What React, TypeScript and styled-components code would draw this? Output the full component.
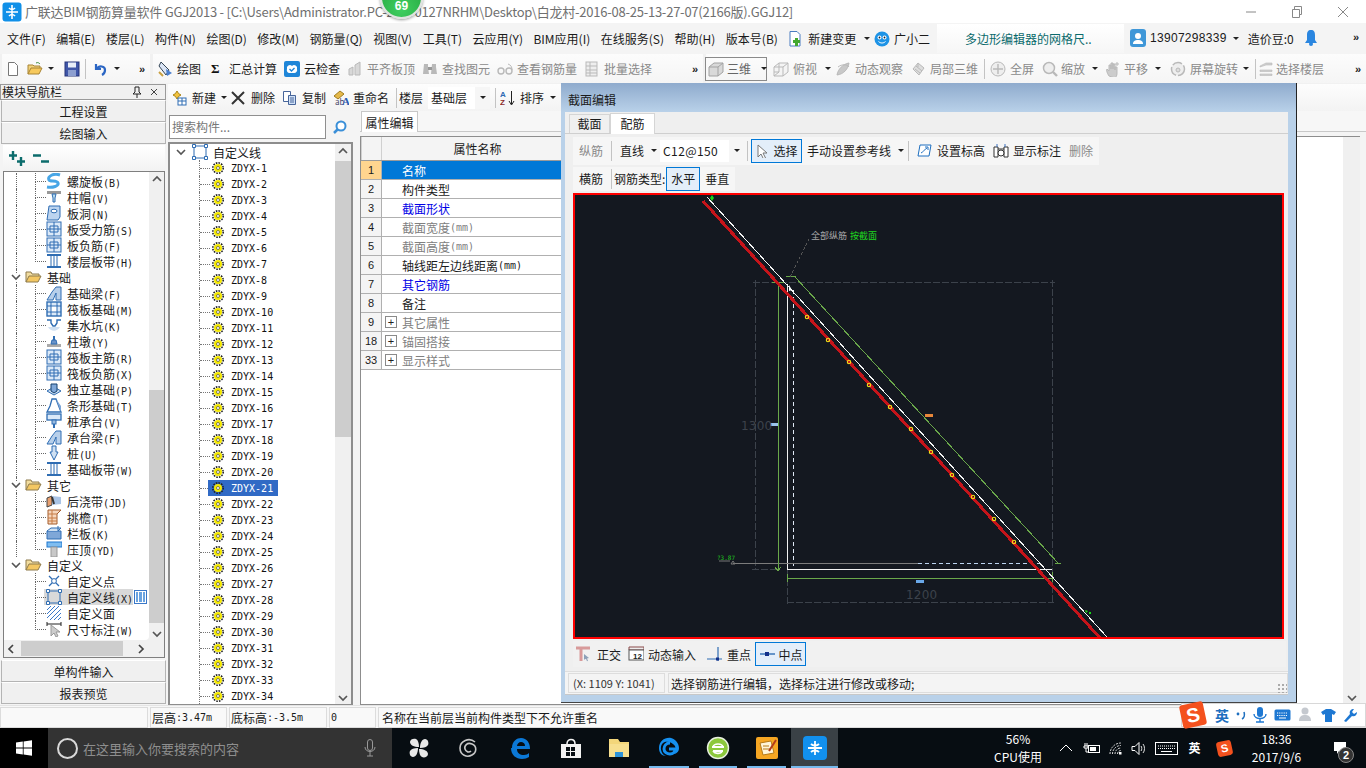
import React from 'react';
import styled, { createGlobalStyle } from 'styled-components';

const Global = createGlobalStyle`
  html, body { margin: 0; padding: 0; background: #fff; overflow: hidden; }
  * { box-sizing: border-box; }
  body { font-family: "Noto Sans CJK SC", "Liberation Sans", sans-serif; font-size: 12px; color: #1a1a1a; }
`;

const Lat = styled.span`font-family: "DejaVu Sans Mono", "Liberation Mono", monospace; font-size: 10px;`;
const Mix = ({ t }: { t: string }) => (
  <>{t.split(/([\x00-\x7f]+)/).map((p, i) => (/^[\x00-\x7f]+$/.test(p) ? <Lat key={i}>{p}</Lat> : p))}</>
);

const Svg = styled.svg`flex: none; display: block;`;
const Ic = ({ s = 16, w, h, children }: { s?: number; w?: number; h?: number; children: React.ReactNode }) => (
  <Svg width={w ?? s} height={h ?? s} viewBox={`0 0 ${w ?? s} ${h ?? s}`}>{children}</Svg>
);

/* ---------- toolbar and tree icons ---------- */
const G = '#b9b9b9';
const B = '#2f6db3';
const icons: Record<string, React.ReactNode> = {
  doc: <path d="M2.5 1.5h6l3 3v10h-9z" fill="#fff" stroke="#777" />,
  open: <><path d="M1 13V4h5l1 1h6v2" fill="#f1d27a" stroke="#a88434" /><path d="M1 13l3-6h11l-3 6z" fill="#f7c95c" stroke="#a88434" /><path d="M9 2c2-1 3 0 4 1" stroke="#3a8a3a" fill="none" /></>,
  save: <><rect x="1" y="1" width="14" height="14" fill="#3f56a8" stroke="#26357a" /><rect x="4" y="1.5" width="8" height="5" fill="#e8eef8" /><rect x="4" y="9" width="8" height="6" fill="#8d9fd0" /></>,
  undo: <path d="M3 3v5h5M4 8c2-4 8-3 8 1 0 2-1 4-3 5" fill="none" stroke="#2b66c4" strokeWidth="2.2" />,
  draw: <><path d="M4 1l8 8-3 5-7-9z" fill="#dbe5f5" stroke="#345" /><path d="M9 8l6 4-5 3z" fill="#4a7fd0" /><path d="M2 11l4 4" stroke="#c9a040" strokeWidth="2" /></>,
  cloud: <><rect x="0" y="0" width="16" height="16" rx="2" fill="#1f86d8" /><path d="M3 8a3 3 0 0 1 5-3 3 3 0 0 1 5 3 3 3 0 0 1-3 4H5a3 3 0 0 1-2-4z" fill="#fff" /><path d="M5.5 8l2 2 3-3" fill="none" stroke="#1f86d8" strokeWidth="1.4" /></>,
  align: <><path d="M2 14V8l4-2v8zM8 14V4l5-3v13z" fill="#d8d8d8" stroke={G} /></>,
  binoc: <><path d="M2 3h4v3l1 7H1zM10 3h4v3l1 7H9z" fill={G} /><rect x="6" y="6" width="4" height="3" fill="#999" /></>,
  glass: <><circle cx="4" cy="10" r="3" fill="none" stroke={G} strokeWidth="1.4" /><circle cx="12" cy="10" r="3" fill="none" stroke={G} strokeWidth="1.4" /><path d="M11 3c3 1 4 3 4 6" stroke={G} fill="none" /></>,
  batch: <><rect x="2" y="1" width="11" height="14" fill="#eee" stroke={G} /><path d="M2 5h11M2 9h11M2 12h11M6 1v14" stroke={G} /></>,
  cube: <><path d="M1 6l5-4h9v9l-5 4H1z" fill="#d9d9d9" stroke="#a3a3a3" /><path d="M1 6h9v9M10 6l5-4" fill="none" stroke="#a3a3a3" /></>,
  wire: <><path d="M1 6l5-4h9v9l-5 4H1z" fill="#f4f4f4" stroke={G} /><path d="M1 6h9v9M10 6l5-4M6 2v9H1M6 11l-5 4" fill="none" stroke={G} /></>,
  orbit: <><path d="M2 14c1-6 6-11 12-12-1 6-5 11-12 12z" fill="#c8c8c8" stroke={G} /><path d="M3 6c4-3 9-3 11 0" fill="none" stroke={G} /></>,
  part: <><path d="M3 8l5-6 6 5-5 7z" fill="#ddd" stroke={G} /><path d="M6 5l6 5M5 8l5 4M8 2v4" stroke={G} /></>,
  full: <><circle cx="8" cy="8" r="7" fill="#eee" stroke={G} /><path d="M8 3v10M3 8h10" stroke={G} strokeWidth="1.4" /></>,
  zoom: <><circle cx="7" cy="7" r="5.5" fill="#eee" stroke={G} strokeWidth="1.5" /><path d="M11 11l4 4" stroke={G} strokeWidth="2.4" /></>,
  hand: <><path d="M4 15c-2-3-3-6-2-7l2 2V4h2v4-6h2v6-5h2v6-3h2v6c0 3-1 4-2 5z" fill="#ccc" stroke={G} /><path d="M12 1v4M10 3h4" stroke={G} /></>,
  rot: <><circle cx="8" cy="8" r="6.5" fill="#eee" stroke={G} strokeWidth="1.5" strokeDasharray="10 2" /><circle cx="8" cy="9" r="2" fill="#ddd" stroke={G} /></>,
  floors: <><path d="M2 5l6-3h6v2H8L2 6zM2 9h12v1.5H2zM2 13h12v1.5H2z" fill="#cfcfcf" stroke={G} strokeWidth=".6" /></>,
  newc: <><path d="M6 1l1.6 2.6L10 5 7.6 6.4 6 9 4.4 6.4 2 5l2.4-1.4z" fill="#f2c23c" stroke="#a98418" /><rect x="7" y="8" width="8" height="7" fill="#fff" stroke="#2f6db3" /><path d="M7 11h8M11 8v7" stroke="#2f6db3" /></>,
  copy: <><path d="M1.5 1.5h7v10h-7z" fill="#fff" stroke="#47659a" /><path d="M6.5 5.5h7v9h-7z" fill="#cfe0f6" stroke="#47659a" /><path d="M8 8h4M8 10h4M8 12h4" stroke="#47659a" /></>,
  rename: <><path d="M1 6l6-5 4 3-6 5z" fill="#e5b94a" stroke="#a07c20" /><text x="2" y="15" fontSize="8" fill="#446">ab</text><text x="9" y="15" fontSize="11" fontWeight="700" fill="#2a5bb0" fontFamily="Liberation Serif">A</text></>,
  az: <><text x="0" y="7" fontSize="8" fontWeight="700" fill="#2e6ab3" fontFamily="Liberation Sans">A</text><text x="0" y="15" fontSize="8" fontWeight="700" fill="#8a2a2a" fontFamily="Liberation Sans">Z</text><path d="M11.5 1v13M9 11l2.5 4 2.5-4" stroke="#222" fill="none" /></>,
  change: <><path d="M2 .5h7l3 3V15H2z" fill="#fff" stroke="#4a7cc0" /><path d="M7 7h3v2h2v3h-2v3H7v-3H5V9h2z" fill="#43a82e" /></>,
  mascot: <><circle cx="8" cy="8" r="7.5" fill="#1d93e6" /><circle cx="5.5" cy="6.5" r="2" fill="#fff" /><circle cx="10.5" cy="6.5" r="2" fill="#fff" /><circle cx="5.5" cy="6.5" r=".9" fill="#123" /><circle cx="10.5" cy="6.5" r=".9" fill="#123" /><path d="M4.5 10.5c2 2 5 2 7 0" stroke="#fff" fill="none" /></>,
  user: <><rect width="16" height="18" rx="3" fill="#3f97d8" /><circle cx="8" cy="7" r="3" fill="#fff" /><path d="M3 15c0-3 2-4 5-4s5 1 5 4z" fill="#fff" /></>,
  bell: <><path d="M6 1c3 0 4 2 4 5v5l2 3H0l2-3V6c0-3 1-5 4-5z" fill="#2a86e0" /><circle cx="6" cy="15" r="2" fill="#2a86e0" /></>,
  cursor: <path d="M2 1l0 12 3-3 2.5 5 2-1L7 9h4z" fill="#fff" stroke="#777" />,
  level: <><path d="M3 2h11l-2 11H1z" fill="#fff" stroke="#1e6fc0" /><path d="M4 10c2-1 3-3 6-5M8 4h3v3" stroke="#1e6fc0" fill="none" /></>,
  showm: <><path d="M1 4h4v10H1zM11 4h4v10h-4zM5 6h6" fill="#fff" stroke="#333" /><circle cx="8" cy="10" r="3" fill="#fff" stroke="#333" /><path d="M12 1v3M4 1v3" stroke="#3a70c0" /></>,
  ortho: <><path d="M0 2h14M5 2v13" stroke="#d89a9a" strokeWidth="3" /><path d="M8 8l5 4-2 .4 1 2.4-1 .4-1-2.4-2 1z" fill="#8da0b8" /></>,
  dyn: <><path d="M1 1h15v3H1z" fill="#eee" stroke="#8a4b4b" /><rect x="1" y="4" width="15" height="10" fill="#fff" stroke="#555" /><text x="5" y="13" fontSize="8" fontWeight="700" fill="#222" fontFamily="Liberation Sans">12</text></>,
  perp: <><path d="M1 13h15M12 1v14" stroke="#2f6db3" strokeWidth="1.2" /><rect x="10" y="11.5" width="3" height="3" fill="#14308a" /></>,
  mid: <><path d="M1 8h15" stroke="#2f6db3" strokeWidth="1.4" /><rect x="6" y="6" width="4" height="4" fill="#14308a" /></>,
  spiral: <path d="M14 2C8 0 1 3 3 7c1 2 8 0 9 3s-5 5-11 4" fill="none" stroke="#48a6e6" strokeWidth="3" />,
  cap: <><rect x="1" y="2" width="14" height="3" fill="#999" /><path d="M6 5h4l-1 4v4H7V9z" fill="#bde" stroke={B} /></>,
  hole: <><path d="M3 1h11v11l-2 3H1z" fill="#bcd4f0" stroke={B} /><ellipse cx="8" cy="6" rx="3" ry="1.8" fill="#fff" stroke={B} /></>,
  grid: <><rect x="1" y="1" width="14" height="14" fill="#dbe9f8" stroke={B} /><path d="M1 8h14M8 1v14" stroke={B} /><path d="M4 5h8v6H4z" fill="none" stroke={B} /></>,
  band: <><path d="M1 2h14M1 14h14" stroke={B} strokeWidth="2" /><path d="M5 2v12M11 2v12M8 3v10" stroke={B} /></>,
  beam: <><path d="M1 15l5-8 4-5h5v13H10V8l-3 7z" fill="#b7cfea" stroke={B} /></>,
  raft: <><rect x="1" y="1" width="14" height="14" fill="#dbe9f8" stroke={B} strokeWidth="1.4" /><rect x="5" y="5" width="6" height="6" fill="#fff" stroke={B} /><path d="M1 5h4M1 11h4M11 5h4M11 11h4M5 1v4M11 1v4M5 11v4M11 11v4" stroke={B} /></>,
  sump: <><path d="M1 3h4v3l2 3h2l2-3V3h4" fill="none" stroke={B} strokeWidth="1.4" /><path d="M2 10c3 5 9 5 12 0z" fill="#cfe0f2" /></>,
  pier: <><rect x="1" y="11" width="14" height="3" fill="#aaa" /><path d="M5 11l1-4h4l1 4z" fill="#6b93c8" stroke={B} /><rect x="7" y="3" width="2" height="4" fill={B} /></>,
  iso: <><path d="M1 10l7 4 7-4-7-4z" fill="#cfe0f2" stroke={B} /><path d="M5 3h6v7l-3 2-3-2z" fill="#7fa7d8" stroke="#14406e" /></>,
  strip: <><path d="M1 15l3-6 2-7h4l5 13z" fill="#fff" stroke={B} strokeWidth="1.3" /><path d="M10 2l5 7v6" fill="#7fa7d8" /></>,
  capb: <><rect x="1" y="1" width="14" height="6" fill="#dbe9f8" stroke={B} strokeWidth="1.3" /><rect x="6" y="7" width="4" height="4" fill="#9bbce0" stroke={B} /><path d="M8 11v4" stroke={B} strokeWidth="2" /></>,
  pile: <><path d="M6 1h4v6h2l-4 8-4-8h2z" fill="#cfe0f2" stroke={B} /></>,
  post: <><path d="M1 5l5-2v9l-5 2z" fill="#e8a070" stroke="#444" /><path d="M6 3l9 1v7l-9 1z" fill="#a9c4e6" /><path d="M6 4l2 7" stroke="#333" strokeWidth="2" /></>,
  eave: <><path d="M2 1h13l-4 4v10H2z" fill="#f6d6bd" stroke="#a35c2c" /><path d="M2 5h9M2 9h9M2 12h9M6 1v14" stroke="#c57a44" /></>,
  rail: <><path d="M1 6h14v8H1z" fill="#7fa7d8" stroke={B} /><path d="M1 6l4-3h10l-3 3M12 1v5" fill="#cfe0f2" stroke={B} /></>,
  top: <><rect x="1" y="1" width="15" height="5" fill="#7fbdf0" stroke="#1f78d0" /><rect x="5" y="6" width="6" height="10" fill="#c8c8c8" stroke="#999" /></>,
  point: <><path d="M3 3l10 10M13 3L3 13" stroke={B} strokeWidth="1.3" /><circle cx="8" cy="8" r="2.4" fill="#fff" stroke={B} /></>,
  line: <><rect x="2" y="2" width="12" height="12" fill="none" stroke={B} /><path d="M.5.5h3v3h-3zM12.5.5h3v3h-3zM.5 12.5h3v3h-3zM12.5 12.5h3v3h-3z" fill="#fff" stroke={B} /></>,
  face: <><rect x="1" y="1" width="14" height="14" fill="#fff" /><path d="M1 5l4-4M1 9l8-8M1 13L13 1M4 15L15 4M8 15l7-7M12 15l3-3" stroke="#3a78c8" /></>,
  dim: <><path d="M1 1v4M15 1v4M1 3h14" stroke="#222" /><path d="M5 4v11l3-3 2 4 2-1-2-4h4z" fill="#ccc" stroke="#999" /></>,
};
const Icon = ({ n, s = 16 }: { n: string; s?: number }) => <Ic s={s}>{icons[n]}</Ic>;

const Gear = () => (
  <Ic s={12}>
    <circle cx="6" cy="6" r="5.2" fill="none" stroke="#222" strokeWidth="1.6" strokeDasharray="1.6 1.1" />
    <circle cx="6" cy="6" r="4" fill="#f4e800" />
    <circle cx="6" cy="6" r="1.5" fill="#fff" stroke="#333" strokeWidth=".6" />
  </Ic>
);
const Chev = () => (
  <Ic w={12} h={8}><path d="M2 2l4 4 4-4" fill="none" stroke="#555" strokeWidth="1.6" /></Ic>
);
const Folder = () => (
  <Ic w={17} h={14}>
    <path d="M1 12V2h5l1 2h7v2" fill="#f2dda0" stroke="#8d7a4c" />
    <path d="M1 12l3-6h12l-3 6z" fill="#f3c763" stroke="#8d7a4c" />
  </Ic>
);
const Caret = styled.i<{ $l?: number; $r?: number }>`
  flex: none; width: 0; height: 0; display: block;
  border: 3px solid transparent; border-top: 3px solid #222; border-bottom: 0;
  margin-left: ${p => p.$l ?? 7}px; margin-right: ${p => p.$r ?? 0}px;
`;

/* ---------- frame ---------- */
const Root = styled.div`
  position: relative; width: 1366px; height: 768px; overflow: hidden; display: flex; flex-direction: column; background: #f4f4f4;
`;
const Title = styled.div`
  flex: none; height: 23px; background: #fff; display: flex; align-items: center; padding-left: 2px; color: #707070; font-size: 13px; white-space: nowrap;
`;
const TitleText = styled.span`margin-left: 3px; flex: 1; letter-spacing: -0.018em;`;
const WinBtn = styled.span`flex: none; width: 46px; height: 23px; display: flex; align-items: center; justify-content: center;`;
const Badge = styled.div`
  position: absolute; left: 380px; top: -24px; width: 43px; height: 43px; border-radius: 50%;
  background: radial-gradient(circle at 50% 80%, #3fcf60, #1f9e38); border: 2px solid #dfe3df; box-shadow: 0 1px 3px #0006;
  display: flex; align-items: flex-end; justify-content: center; color: #fff; font: 700 12px "Liberation Sans", sans-serif; padding-bottom: 4px;
`;
const Menu = styled.div`
  flex: none; height: 31px; background: #f4f4f4; display: flex; align-items: center; padding-left: 7px; gap: 10.5px; white-space: nowrap; position: relative;
`;
const MenuItem = styled.span<{ $ml?: number }>`
  display: flex; align-items: center; gap: 4px; font-size: 12px; ${p => (p.$ml ? `margin-left: ${p.$ml}px;` : '')}
`;
const Notice = styled.div`
  position: absolute; left: 937px; top: 1px; width: 187px; height: 29px; background: linear-gradient(#fff, #f6f6f6);
  color: #0b6a6c; padding-left: 28px; line-height: 29px; font-size: 12px;
`;
const Account = styled.div`
  position: absolute; left: 1130px; top: 5px; display: flex; align-items: center; height: 20px; font-size: 12px;
`;
const Phone = styled.span`margin-left: 4px; letter-spacing: .3px; font-family: "Liberation Sans", sans-serif;`;
const Beans = styled.span`margin-left: 9px;`;
const Bell = styled.span`margin-left: 11px;`;
const More = styled.span`
  font: 700 11px "Liberation Sans", sans-serif; color: #222; margin-left: auto; margin-right: 5px;
`;
const CornerMore = styled(More)`position: absolute; left: 1353px; top: 8px; margin: 0;`;
const Bar = styled.div`
  flex: none; height: 30px; background: #f1f1f1; display: flex; align-items: stretch; gap: 3px; padding: 0 0 1px 2px; white-space: nowrap;
`;
const Group = styled.div<{ $w?: number; $gap?: number }>`
  display: flex; align-items: center; gap: ${p => p.$gap ?? 8}px; padding: 0 0 0 4px;
  ${p => (p.$w ? `width: ${p.$w}px; flex: none;` : 'flex: 1;')}
  background: linear-gradient(#fcfcfc, #f5f5f5);
`;
const Tool = styled.span<{ $dim?: boolean; $gap?: number; $ml?: number }>`
  display: flex; align-items: center; gap: ${p => p.$gap ?? 4}px; color: ${p => (p.$dim ? '#8a8a8a' : '#1c1c1c')}; font-size: 12px;
  ${p => (p.$ml ? `margin-left: ${p.$ml}px;` : '')}
`;
const Sep = styled.i<{ $h?: number; $ml?: number }>`
  flex: none; display: block; width: 1px; height: ${p => p.$h ?? 20}px; background: #c3c3c3; ${p => (p.$ml ? `margin-left: ${p.$ml}px;` : '')}
`;
const Sigma = styled.b`font: 700 13px "Liberation Serif", serif; width: 10px; color: #111;`;
const View = styled.span`
  flex: none; width: 62px; height: 24px; border: 1px solid #8a8a8a; display: flex; align-items: center; padding-left: 2px; gap: 3px; color: #666; margin-left: -5px;
`;

const Work = styled.div`flex: 1; display: flex; min-height: 0; background: #f4f4f4;`;

/* ---------- left navigator ---------- */
const Nav = styled.aside`flex: none; width: 167px; display: flex; flex-direction: column; padding-bottom: 1px;`;
const NavHead = styled.div`
  flex: none; height: 16px; margin: 0 1px 0 0; border: 1px solid #9a9a9a; display: flex; align-items: center; padding: 0 5px 0 1px; background: #f0f0f0; font-size: 12px; line-height: 14px;
`;
const NavHeadText = styled.span`flex: 1;`;
const NavBtn = styled.div`
  flex: none; height: 22px; margin: 0 1px 0 1px; border: 1px solid #b4b4b4; border-top-color: #fff; background: #f0f0f0; display: flex; align-items: center; justify-content: center; font-size: 12px;
`;
const NavTools = styled.div`
  flex: none; height: 26px; margin: 1px 2px 0 3px; background: linear-gradient(#fff, #f2f2f2); display: flex; align-items: center; gap: 6px; padding-left: 5px;
`;
const NavTreeBox = styled.div`flex: 1; margin: 0 2px 2px 3px; border: 1px solid #7f7f7f; min-height: 0; display: flex; flex-direction: column; background: #f0f0f0;`;
const NavTreeTop = styled.div`flex: 1; min-height: 0; display: flex;`;
const TreeBody = styled.div`flex: 1; background: #fff; padding-top: 1px; overflow: hidden; border-radius: 0 0 4px 0;`;
const VScroll = styled.div<{ $w?: number }>`
  flex: none; width: ${p => p.$w ?? 15}px; background: #f0f0f0; position: relative; display: flex; flex-direction: column;
`;
const Thumb = styled.div<{ $t: number; $h: number }>`
  position: absolute; left: 0; right: 0; top: ${p => p.$t}px; height: ${p => p.$h}px; background: #cdcdcd;
`;
const ScrollEnd = styled.div<{ $bottom?: boolean }>`
  position: absolute; left: 0; right: 0; ${p => (p.$bottom ? 'bottom: 2px;' : 'top: 3px;')} display: flex; justify-content: center;
`;
const HScroll = styled.div`
  flex: none; height: 17px; display: flex; align-items: center; padding: 0 3px; gap: 4px; background: #f0f0f0;
`;
const HThumb = styled.div`width: 102px; height: 15px; background: #cdcdcd; margin-left: 2px;`;
const Row = styled.div<{ $child?: boolean; $trunk?: boolean }>`
  position: relative; height: 16px; display: flex; align-items: center; font-size: 12px; white-space: nowrap;
  padding-left: ${p => (p.$child ? 42 : 6)}px;
  &::before { content: ''; position: absolute; left: 12px; top: 0; bottom: 0; border-left: ${p => (p.$trunk ? '1px dotted #666' : '0')}; }
  &::after { ${p => (p.$child ? "content: '';" : '')} position: absolute; left: 31px; top: 0; width: 10px; height: 8px; border-left: 1px dotted #666; border-bottom: 1px dotted #666; }
`;
const Stem = styled.i`position: absolute; left: 31px; top: 8px; height: 8px; border-left: 1px dotted #666;`;
const ChevBox = styled.span`flex: none; width: 12px; margin-right: 3px; background: #fff; z-index: 1;`;
const RowLabel = styled.span<{ $ml?: number }>`
  margin-left: ${p => p.$ml ?? 5}px;
`;
const SelBand = styled.span`display: flex; align-items: center; background: #d9d9d9; height: 16px; margin-left: -2px; padding-left: 2px;`;
const Mini = styled.span`flex: none; margin-left: 1px; border: 1px solid #3a78c8; background: #fff; width: 13px; height: 14px; display: flex; gap: 1px; padding: 1px;`;
const MiniBar = styled.i`flex: 1; background: #6aa3e0;`;

/* ---------- component list ---------- */
const RightCol = styled.div`flex: 1; min-width: 0; display: flex; flex-direction: column;`;
const SubBar = styled.div`
  flex: none; height: 27px; display: flex; align-items: center; padding-left: 3px; gap: 7px; white-space: nowrap; background: linear-gradient(#fdfdfd, #f3f3f3); margin-left: 1px;
`;
const Combo = styled.span<{ $w: number; $ml?: number; $ls?: number }>`
  flex: none; width: ${p => p.$w}px; height: 22px; background: #fff; display: flex; align-items: center; padding-left: 3px; position: relative; font-size: 12px;
  ${p => (p.$ml ? `margin-left: ${p.$ml}px;` : '')}
  ${p => (p.$ls ? `letter-spacing: ${p.$ls}px;` : '')}
`;
const ComboArrow = styled.span`
  position: absolute; right: 0; top: 0; bottom: 0; width: 15px; background: #f6f6f6; display: flex; align-items: center; justify-content: center;
`;
const Split = styled.div`flex: 1; min-height: 0; display: flex;`;
const ListCol = styled.div`flex: none; width: 186px; display: flex; flex-direction: column; margin-left: 1px; margin-right: 6px;`;
const SearchRow = styled.div`flex: none; height: 31px; display: flex; align-items: center; padding-left: 1px; gap: 7px;`;
const SearchInput = styled.div`width: 157px; height: 24px; background: #fff; border: 1px solid #8f8f8f; display: flex; align-items: center; padding-left: 2px; color: #777; font-size: 12px;`;
const ListBox = styled.div`flex: 1; min-height: 0; border: 2px solid #8d8d8d; border-bottom-width: 1px; background: #fff; display: flex; margin-right: 1px;`;
const ListTree = styled.div`flex: 1; overflow: hidden;`;
const ListRoot = styled.div`
  position: relative; height: 16px; display: flex; align-items: center; padding-left: 5px; font-size: 12px; gap: 5px;
`;
const ListRow = styled.div`
  position: relative; height: 16px; display: flex; align-items: center; padding-left: 42px;
  font: 10px "DejaVu Sans Mono", monospace; color: #111;
  &::before { content: ''; position: absolute; left: 29px; top: 0; bottom: 0; border-left: 1px dotted #777; }
  &::after { content: ''; position: absolute; left: 30px; top: 8px; width: 10px; border-top: 1px dotted #777; }
`;
const ListPick = styled.span<{ $sel?: boolean }>`
  display: flex; align-items: center; gap: 7px; height: 16px; margin-left: -4px; padding: 0 ${p => (p.$sel ? 5 : 0)}px 0 4px; z-index: 1;
  ${p => (p.$sel ? 'background: #316ac5; color: #fff;' : '')}
`;

/* ---------- property grid ---------- */
const PropCol = styled.div`flex: 1; min-width: 0; display: flex; flex-direction: column; background: #f4f4f4;`;
const TabLine = styled.div`flex: none; height: 21px; display: flex; align-items: flex-end; padding-left: 1px; border-bottom: 1px solid #c8c8c8; background: #f7f7f7;`;
const PropTab = styled.div`width: 57px; height: 21px; background: #fff; border: 1px solid #c8c8c8; border-bottom: 0; margin-bottom: -1px; display: flex; align-items: center; justify-content: center; font-size: 12px;`;
const PropBody = styled.div`flex: 1; min-height: 0; margin: 4px 6px 0 0; background: #fff; border: 1px solid #8d8d8d; border-width: 1px 0 1px 1px; display: flex; justify-content: space-between;`;
const PropTable = styled.div`flex: none; width: 213px;`;
const HeadRow = styled.div`display: grid; grid-template-columns: 20px 192px; height: 24px; border-bottom: 1px solid #9a9a9a; background: #f4f4f4;`;
const HeadCell = styled.div`display: flex; align-items: center; justify-content: center; border-left: 1px solid #d0d0d0; font-size: 12px;`;
const PRow = styled.div`display: grid; grid-template-columns: 20px 1fr; height: 19px;`;
const Num = styled.div<{ $on?: boolean }>`
  display: flex; align-items: center; justify-content: center; font: 11px "Liberation Sans", sans-serif; border-bottom: 1px solid #b0b0b0; background: ${p => (p.$on ? '#ffd58f' : '#f4f4f4')};
`;
const PCell = styled.div<{ $c?: string; $on?: boolean; $exp?: boolean }>`
  display: flex; align-items: center; padding-left: ${p => (p.$exp ? 3 : 20)}px; font-size: 12px; border-bottom: 1px solid #b0b0b0; border-left: 1px solid #b0b0b0;
  color: ${p => (p.$on ? '#fff' : p.$c ?? '#1a1a1a')}; background: ${p => (p.$on ? '#0078d7' : '#fff')};
`;
const Plus = styled.span`
  flex: none; width: 12px; height: 12px; border: 1px solid #8a8a8a; margin-right: 5px; display: flex; align-items: center; justify-content: center;
  font: 11px/10px "Liberation Sans", sans-serif; color: #222;
`;

/* ---------- dialog ---------- */
const Dialog = styled.section`
  position: absolute; left: 561px; top: 83px; width: 736px; height: 620px; display: flex; flex-direction: column;
  background: #b9d1e9; border-right: 1px solid #222; border-bottom: 1px solid #444; padding: 0 8px 7px 4px;
`;
const DlgTitle = styled.div`
  flex: none; height: 29px; margin: 0 -8px 0 -4px; padding: 9px 0 0 7px; background: linear-gradient(#8fabcd, #b9d1e9); font-size: 12px; color: #1a1a1a; line-height: 16px;
`;
const DlgBody = styled.div`flex: 1; min-height: 0; background: #efefef; display: flex; flex-direction: column; padding: 1px 0 0;`;
const DlgTabs = styled.div`flex: none; height: 21px; display: flex; align-items: flex-end; padding-left: 4px; border-bottom: 1px solid #cfcfcf;`;
const DlgTab = styled.div<{ $on?: boolean }>`
  flex: none; width: ${p => (p.$on ? 45 : 41)}px; height: ${p => (p.$on ? 21 : 19)}px; display: flex; align-items: center; justify-content: center; font-size: 12px; padding-bottom: 2px;
  background: ${p => (p.$on ? '#fff' : '#f0f0f0')}; border: 1px solid #d5d5d5; border-bottom: 0; margin-bottom: ${p => (p.$on ? -1 : 0)}px;
`;
const DlgInner = styled.div`flex: 1; min-height: 0; margin: 3px 2px 0 8px; display: flex; flex-direction: column;`;
const DBar = styled.div<{ $w: number; $h: number; $mb: number }>`
  flex: none; width: ${p => p.$w}px; height: ${p => p.$h}px; margin-bottom: ${p => p.$mb}px; background: #f6f6f6; display: flex; align-items: center; padding: 0 0 1px 6px; gap: 8px; white-space: nowrap; font-size: 12px;
`;
const Hot = styled.span<{ $w: number; $ml?: number }>`
  flex: none; width: ${p => p.$w}px; height: 24px; border: 1px solid #0078d7; background: #e3eefa; display: flex; align-items: center; justify-content: center; gap: 4px; font-size: 12px;
  margin-left: ${p => p.$ml ?? 0}px;
`;
const Canvas = styled.div`flex: none; width: 711px; height: 446px; border: 2px solid #f00; background: #141820;`;
const ModeBar = styled.div`flex: none; height: 26px; margin-top: 2px; display: flex; align-items: center; padding-left: 3px; gap: 7px; white-space: nowrap; background: #f1f1f1; font-size: 12px;`;
const DlgStatus = styled.div`
  flex: none; height: 24px; margin-top: 5px; background: #f4f4f4; display: flex; gap: 3px; padding: 1px 0 1px 3px; position: relative; border-top: 1px solid #dedede; border-bottom: 1px solid #c8c8c8;
`;
const Coord = styled.div`flex: none; width: 97px; border: 1px solid #ddd; display: flex; align-items: center; padding-left: 4px; font: 11px "Noto Sans CJK SC", sans-serif; color: #333;`;
const Hint = styled.div`flex: 1; border: 1px solid #ddd; display: flex; align-items: center; padding-left: 2px; font-size: 12px;`;
const Grip = styled.i`position: absolute; right: 1px; bottom: 1px; width: 10px; height: 10px; background: radial-gradient(circle, #aaa 1px, transparent 1.2px) 0 0 / 4px 4px;`;

/* ---------- status + taskbar ---------- */
const Status = styled.div`flex: none; height: 23px; position: relative; display: flex; background: #f7f7f7; gap: 2px; padding: 1px 0 0 0; border-top: 1px solid #e4e4e4; white-space: nowrap;`;
const Cell = styled.div<{ $w?: number; $pad?: number }>`
  ${p => (p.$w ? `flex: none; width: ${p.$w}px;` : 'flex: 1;')}
  border: 1px solid #dcdcdc; display: flex; align-items: center; padding-left: ${p => p.$pad ?? 1}px; font-size: 12px; background: #f9f9f9;
`;
const Sogou = styled.div`
  position: absolute; right: 0; top: -3px; width: 185px; height: 24px; background: #fff; border: 1px solid #d8d8d8; display: flex; align-items: center;
  padding-left: 33px; gap: 7px; color: #1e6fbf;
`;
const SLogo = styled.span<{ $s: number }>`
  flex: none; width: ${p => p.$s}px; height: ${p => p.$s}px; background: #f4511e; border-radius: 3px; transform: rotate(-12deg); color: #fff;
  font: 700 ${p => p.$s - 4}px/${p => p.$s}px "Liberation Sans", sans-serif; text-align: center;
`;
const SLogoBig = styled(SLogo)`position: absolute; left: -1px; top: -1px;`;
const SgText = styled.b`font: 700 14px "Noto Sans CJK SC", sans-serif;`;
const Task = styled.div`flex: none; height: 40px; background: #070d12; display: flex; align-items: stretch; color: #fff;`;
const Start = styled.div`flex: none; width: 48px; background: #000; display: flex; align-items: center; justify-content: center;`;
const Search = styled.div`
  flex: none; width: 344px; background: #333; display: flex; align-items: center; padding: 0 16px 0 9px; gap: 5px; color: #8e8e8e; font-size: 13px;
`;
const Ring = styled.i`flex: none; width: 21px; height: 21px; border-radius: 50%; border: 2.5px solid #d9d9d9;`;
const SearchText = styled.span`flex: 1;`;
const Apps = styled.div`flex: none; display: flex; margin-left: 2px;`;
const App = styled.div<{ $w: number; $run?: boolean; $on?: boolean }>`
  flex: none; width: ${p => p.$w}px; position: relative; display: flex; align-items: center; justify-content: center;
  ${p => (p.$on ? 'background: #3a4146;' : '')}
  &::after { ${p => (p.$run ? "content: '';" : '')} position: absolute; bottom: 0; left: ${p => (p.$on ? 0 : 5)}px; right: ${p => (p.$on ? 0 : 5)}px; height: 2px; background: #76b9ed; }
`;
const Tray = styled.div`margin-left: auto; display: flex; align-items: center;`;
const TrayCell = styled.div<{ $w: number }>`flex: none; width: ${p => p.$w}px; display: flex; flex-direction: column; align-items: center; justify-content: center; line-height: 18px; font-size: 12px; position: relative; height: 40px;`;
const NotifBadge = styled.i`
  position: absolute; left: 25px; top: 19px; width: 16px; height: 16px; border-radius: 50%; background: #333; border: 1px solid #888; color: #fff;
  font: 700 11px/14px "Liberation Sans", sans-serif; text-align: center;
`;

/* ---------- data ---------- */
type N = { t: string; i?: string; group?: boolean; trunk?: boolean; last?: boolean; sel?: boolean };
const navRows: N[] = [
  { t: '螺旋板(B)', i: 'spiral', trunk: true }, { t: '柱帽(V)', i: 'cap', trunk: true }, { t: '板洞(N)', i: 'hole', trunk: true },
  { t: '板受力筋(S)', i: 'grid', trunk: true }, { t: '板负筋(F)', i: 'grid', trunk: true }, { t: '楼层板带(H)', i: 'band', trunk: true, last: true },
  { t: '基础', group: true, trunk: true },
  { t: '基础梁(F)', i: 'beam', trunk: true }, { t: '筏板基础(M)', i: 'raft', trunk: true }, { t: '集水坑(K)', i: 'sump', trunk: true }, { t: '柱墩(Y)', i: 'pier', trunk: true },
  { t: '筏板主筋(R)', i: 'grid', trunk: true }, { t: '筏板负筋(X)', i: 'grid', trunk: true }, { t: '独立基础(P)', i: 'iso', trunk: true }, { t: '条形基础(T)', i: 'strip', trunk: true },
  { t: '桩承台(V)', i: 'capb', trunk: true }, { t: '承台梁(F)', i: 'beam', trunk: true }, { t: '桩(U)', i: 'pile', trunk: true }, { t: '基础板带(W)', i: 'band', trunk: true, last: true },
  { t: '其它', group: true, trunk: true },
  { t: '后浇带(JD)', i: 'post', trunk: true }, { t: '挑檐(T)', i: 'eave', trunk: true }, { t: '栏板(K)', i: 'rail', trunk: true }, { t: '压顶(YD)', i: 'top', trunk: true, last: true },
  { t: '自定义', group: true },
  { t: '自定义点', i: 'point' }, { t: '自定义线(X)', i: 'line', sel: true }, { t: '自定义面', i: 'face' }, { t: '尺寸标注(W)', i: 'dim', last: true },
];
const props: { n: string; t: string; c?: string; exp?: boolean }[] = [
  { n: '1', t: '名称' }, { n: '2', t: '构件类型' }, { n: '3', t: '截面形状', c: '#0000e6' }, { n: '4', t: '截面宽度(mm)', c: '#808080' },
  { n: '5', t: '截面高度(mm)', c: '#808080' }, { n: '6', t: '轴线距左边线距离(mm)' }, { n: '7', t: '其它钢筋', c: '#0000e6' }, { n: '8', t: '备注' },
  { n: '9', t: '其它属性', c: '#808080', exp: true }, { n: '18', t: '锚固搭接', c: '#808080', exp: true }, { n: '33', t: '显示样式', c: '#808080', exp: true },
];
const dots: [number, number][] = [[807, 317], [828, 340], [849, 362], [869, 385], [890, 407], [911, 429], [931, 452], [952, 475], [973, 497], [994, 519], [1014, 542]];

const Drawing = () => (
  <Svg width={707} height={442} viewBox="575 195 707 442">
    <g shapeRendering="crispEdges">
      <g fill="none" stroke="#3c424b">
        <path d="M753 282h302M755 280v289M1052 280v323M752 569h26M787 602h267M787 570v34" strokeDasharray="7 2" />
      </g>
      <path d="M787 284v285h265" fill="none" stroke="#f2f2f2" />
      <path d="M793 290v276" fill="none" stroke="#dfe8f5" strokeDasharray="4 3" />
      <path d="M733 563h185" stroke="#7c7c7c" />
      <path d="M918 563h122" stroke="#bcd4f0" strokeDasharray="4 3" />
      <g fill="none" stroke="#6aa84a">
        <path d="M778 282v288M787 578h265M795 277l263 286" />
        <path d="M772 282h12M786 276h10M1052 572v10M787 574v8M775 567l3 4 3-4M1055 563h6" />
      </g>
      <path d="M707 197l400 440" stroke="#f4f4f4" />
      <path d="M703 201l397 437" stroke="#c6141a" strokeWidth="3" />
      <path d="M790 277l19-38" stroke="#555" strokeDasharray="3 2" />
    </g>
    <path d="M789 285l3 5-3 1z" fill="#fff" />
    {dots.map(([x, y]) => <circle key={x} cx={x} cy={y} r="1.7" fill="none" stroke="#f2e21a" strokeWidth="1.1" />)}
    <path d="M710 198l2-3 2 3-2 3zM1085 610l3 1-2 2zM1089 612h2v2h-2z" fill="#18d818" />
    <rect x="770" y="423" width="8" height="3" fill="#9cc4ea" />
    <rect x="916" y="580" width="8" height="3" fill="#6aa8e8" />
    <rect x="925" y="414" width="8" height="3" fill="#e8873a" />
    <path d="M719 561h11M733 561l-2 3h4z" stroke="#777" fill="none" />
    <text x="717" y="560" fontSize="6" fill="#1fc41f" fontFamily="DejaVu Sans Mono">?3.87</text>
    <text x="741" y="430" fontSize="12" fill="#3c424b" fontFamily="DejaVu Sans" letterSpacing=".2">1300</text>
    <text x="906" y="599" fontSize="12" fill="#3c424b" fontFamily="DejaVu Sans" letterSpacing=".2">1200</text>
    <text x="811" y="239" fontSize="9" fill="#a8a8a8" fontFamily="Noto Sans CJK SC">全部纵筋</text>
    <text x="850" y="239" fontSize="9" fill="#1fd81f" fontFamily="Noto Sans CJK SC">按截面</text>
  </Svg>
);

const Arrow = ({ up }: { up?: boolean }) => (
  <Ic w={10} h={7}><path d={up ? 'M1 6l4-4 4 4' : 'M1 1l4 4 4-4'} fill="none" stroke="#555" strokeWidth="1.7" /></Ic>
);

export default function Page() {
  return (
    <Root>
      <Global />
      <Title>
        <Ic s={20}>
          <rect x=".5" y=".5" width="19" height="19" rx="3" fill="#1090e8" />
          <path d="M10 3v14M4 10h12M7 6c2 2 4 2 6 0M7 14c2-2 4-2 6 0" fill="none" stroke="#fff" strokeWidth="1.6" />
        </Ic>
        <TitleText>广联达BIM钢筋算量软件 GGJ2013 - [C:\Users\Administrator.PC-20170127NRHM\Desktop\白龙村-2016-08-25-13-27-07(2166版).GGJ12]</TitleText>
        <WinBtn><Ic w={12} h={12}><path d="M1 6h10" stroke="#888" /></Ic></WinBtn>
        <WinBtn><Ic w={12} h={12}><path d="M1.5 3.5h7v8h-7zM3.5 3V.5h7v8H9" fill="none" stroke="#888" /></Ic></WinBtn>
        <WinBtn><Ic w={12} h={12}><path d="M1 1l10 10M11 1L1 11" stroke="#888" /></Ic></WinBtn>
      </Title>
      <Badge>69</Badge>

      <Menu>
        {['文件(F)', '编辑(E)', '楼层(L)', '构件(N)', '绘图(D)', '修改(M)', '钢筋量(Q)', '视图(V)', '工具(T)', '云应用(Y)', 'BIM应用(I)', '在线服务(S)', '帮助(H)', '版本号(B)'].map(m => <MenuItem key={m}>{m}</MenuItem>)}
        <MenuItem><Icon n="change" />新建变更<Caret $l={4} /></MenuItem>
        <MenuItem $ml={-7}><Icon n="mascot" />广小二</MenuItem>
        <Notice>多边形编辑器的网格尺..</Notice>
        <Account>
          <Ic w={16} h={18}>{icons.user}</Ic>
          <Phone>13907298339</Phone>
          <Caret $l={6} />
          <Beans>造价豆:0</Beans>
          <Bell><Ic w={12} h={18}>{icons.bell}</Ic></Bell>
        </Account>
        <CornerMore>»</CornerMore>
      </Menu>

      <Bar>
        <Group $w={148} $gap={5}>
          <Icon n="doc" />
          <Tool $gap={3}><Icon n="open" /><Caret $l={2} /></Tool>
          <Tool $ml={5}><Icon n="save" /></Tool>
          <Sep />
          <Tool $gap={3} $ml={2}><Icon n="undo" /><Caret $l={2} /></Tool>
          <More>»</More>
        </Group>
        <Group $w={550} $gap={7}>
          <Tool><Icon n="draw" />绘图</Tool>
          <Tool $ml={3}><Sigma>Σ</Sigma></Tool>
          <Tool $ml={1}>汇总计算</Tool>
          <Tool><Icon n="cloud" />云检查</Tool>
          <Tool $dim><Icon n="align" />平齐板顶</Tool>
          <Tool $dim><Icon n="binoc" />查找图元</Tool>
          <Tool $dim><Icon n="glass" />查看钢筋量</Tool>
          <Tool $dim><Icon n="batch" />批量选择</Tool>
          <More>»</More>
        </Group>
        <Group $gap={6}>
          <View><Icon n="cube" />三维<Caret $l={7} /></View>
          <Tool $dim><Icon n="wire" />俯视<Caret $l={4} /></Tool>
          <Tool $dim $ml={-2}><Icon n="orbit" />动态观察</Tool>
          <Tool $dim $ml={1}><Icon n="part" />局部三维</Tool>
          <Sep />
          <Tool $dim $ml={-1}><Icon n="full" />全屏</Tool>
          <Tool $dim $gap={3} $ml={2}><Icon n="zoom" />缩放<Caret $l={4} /></Tool>
          <Tool $dim $gap={3} $ml={1}><Icon n="hand" />平移<Caret $l={4} /></Tool>
          <Tool $dim $ml={3}><Icon n="rot" />屏幕旋转<Caret $l={1} /></Tool>
          <Sep />
          <Tool $dim $gap={2} $ml={-4}><Icon n="floors" />选择楼层</Tool>
          <More>»</More>
        </Group>
      </Bar>

      <Work>
        <Nav>
          <NavHead>
            <NavHeadText>模块导航栏</NavHeadText>
            <Ic w={10} h={12}><path d="M3 1h4v5l2 2H1l2-2zM5 8v4" fill="none" stroke="#222" /></Ic>
            <Ic w={18} h={12}><path d="M9 3l6 6M15 3L9 9" stroke="#444" /></Ic>
          </NavHead>
          <NavBtn>工程设置</NavBtn>
          <NavBtn>绘图输入</NavBtn>
          <NavTools>
            <Ic w={18} h={16}><path d="M5 1v9M1 5.500h8M13 7v9M9 11.500h8" stroke="#0c6c6c" strokeWidth="2.400" /></Ic>
            <Ic w={18} h={16}><path d="M1 5.500h8M9 11.500h8" stroke="#0c6c6c" strokeWidth="2.400" /></Ic>
          </NavTools>
          <NavTreeBox>
            <NavTreeTop>
              <TreeBody>
                {navRows.map(r => (
                  <Row key={r.t} $child={!r.group} $trunk={r.trunk}>
                    {r.group ? (
                      <>
                        <ChevBox><Chev /></ChevBox>
                        <Folder />
                        <RowLabel>{r.t}</RowLabel>
                      </>
                    ) : (
                      <>
                        {!r.last && <Stem />}
                        {r.sel ? (
                          <SelBand><Icon n={r.i ?? ''} /><RowLabel><Mix t={r.t} /></RowLabel></SelBand>
                        ) : (
                          <><Icon n={r.i ?? ''} /><RowLabel><Mix t={r.t} /></RowLabel></>
                        )}
                        {r.sel && <Mini><MiniBar /><MiniBar /><MiniBar /></Mini>}
                      </>
                    )}
                  </Row>
                ))}
              </TreeBody>
              <VScroll>
                <Thumb $t={218} $h={233} />
                <ScrollEnd><Arrow up /></ScrollEnd>
                <ScrollEnd $bottom><Arrow /></ScrollEnd>
              </VScroll>
            </NavTreeTop>
            <HScroll>
              <Ic w={8} h={10}><path d="M6 1L2 5l4 4" fill="none" stroke="#444" strokeWidth="1.7" /></Ic>
              <HThumb />
              <Ic w={20} h={10}><path d="M12 1l4 4-4 4" fill="none" stroke="#444" strokeWidth="1.7" /></Ic>
            </HScroll>
          </NavTreeBox>
          <NavBtn>单构件输入</NavBtn>
          <NavBtn>报表预览</NavBtn>
        </Nav>

        <RightCol>
          <SubBar>
            <Tool><Ic w={17} h={16}>{icons.newc}</Ic>新建<Caret $l={1} /></Tool>
            <Tool $gap={6} $ml={-3}><Ic w={14} h={14}><path d="M1 1l12 12M13 1L1 13" stroke="#333" strokeWidth="2" /></Ic>删除</Tool>
            <Tool><Icon n="copy" />复制</Tool>
            <Tool><Icon n="rename" />重命名</Tool>
            <Sep />
            <Tool $ml={-5}>楼层</Tool>
            <Combo $w={62} $ml={-2}>基础层<ComboArrow><Caret $l={0} /></ComboArrow></Combo>
            <Sep $ml={-2} />
            <Tool $ml={-3}><Icon n="az" />排序<Caret $l={2} /></Tool>
          </SubBar>
          <Split>
            <ListCol>
              <SearchRow>
                <SearchInput>搜索构件...</SearchInput>
                <Ic w={14} h={14}><circle cx="8" cy="6" r="4.500" fill="#fff" stroke="#3a8fd8" strokeWidth="2" /><path d="M5 9l-4 4" stroke="#3a8fd8" strokeWidth="2.500" /></Ic>
              </SearchRow>
              <ListBox>
                <ListTree>
                  <ListRoot><Chev /><Icon n="line" />自定义线</ListRoot>
                  {Array.from({ length: 34 }, (_, i) => (
                    <ListRow key={i}>
                      <ListPick $sel={i === 20}><Gear />ZDYX-{i + 1}</ListPick>
                    </ListRow>
                  ))}
                </ListTree>
                <VScroll $w={16}>
                  <Thumb $t={17} $h={276} />
                  <ScrollEnd><Arrow up /></ScrollEnd>
                  <ScrollEnd $bottom><Arrow /></ScrollEnd>
                </VScroll>
              </ListBox>
            </ListCol>
            <PropCol>
              <TabLine><PropTab>属性编辑</PropTab></TabLine>
              <PropBody>
                <PropTable>
                  <HeadRow><HeadCell /><HeadCell>属性名称</HeadCell></HeadRow>
                  {props.map((p, i) => (
                    <PRow key={p.n}>
                      <Num $on={i === 0}>{p.n}</Num>
                      <PCell $c={p.c} $on={i === 0} $exp={p.exp}>
                        {p.exp && <Plus>+</Plus>}
                        <Mix t={p.t} />
                      </PCell>
                    </PRow>
                  ))}
                </PropTable>
                <VScroll $w={17}>
                  <ScrollEnd $bottom><Arrow /></ScrollEnd>
                </VScroll>
              </PropBody>
            </PropCol>
          </Split>
        </RightCol>
      </Work>

      <Dialog>
        <DlgTitle>截面编辑</DlgTitle>
        <DlgBody>
          <DlgTabs><DlgTab>截面</DlgTab><DlgTab $on>配筋</DlgTab></DlgTabs>
          <DlgInner>
            <DBar $w={526} $h={28} $mb={2}>
              <Tool $dim>纵筋</Tool>
              <Sep />
              <Tool>直线<Caret $l={3} /></Tool>
              <Combo $w={84} $ml={-5} $ls={0.4}>C12@150<ComboArrow><Caret $l={0} /></ComboArrow></Combo>
              <Sep $ml={-5} />
              <Hot $w={51} $ml={-5}><Ic s={14}>{icons.cursor}</Ic>选择</Hot>
              <Tool $ml={-3}>手动设置参考线<Caret $l={3} /></Tool>
              <Sep $ml={-4} />
              <Tool><Icon n="level" />设置标高</Tool>
              <Tool><Icon n="showm" />显示标注</Tool>
              <Tool $dim>删除</Tool>
            </DBar>
            <DBar $w={162} $h={24} $mb={2}>
              <Tool>横筋</Tool>
              <Sep />
              <Tool $ml={-6}>钢筋类型:</Tool>
              <Hot $w={34} $ml={-7}>水平</Hot>
              <Tool $ml={-3}>垂直</Tool>
            </DBar>
            <Canvas><Drawing /></Canvas>
            <ModeBar>
              <Tool $gap={5}><Icon n="ortho" />正交</Tool>
              <Tool><Icon n="dyn" />动态输入</Tool>
              <Tool $ml={3} $gap={5}><Icon n="perp" />重点</Tool>
              <Hot $w={51} $ml={-3}><Icon n="mid" />中点</Hot>
            </ModeBar>
          </DlgInner>
          <DlgStatus>
            <Coord>(X: 1109 Y: 1041)</Coord>
            <Hint>选择钢筋进行编辑，选择标注进行修改或移动;</Hint>
            <Grip />
          </DlgStatus>
        </DlgBody>
      </Dialog>

      <Status>
        <Cell $w={148} />
        <Cell $w={77}><Mix t="层高:3.47m" /></Cell>
        <Cell $w={98}><Mix t="底标高:-3.5m" /></Cell>
        <Cell $w={47}><Mix t="0" /></Cell>
        <Cell $pad={3}>名称在当前层当前构件类型下不允许重名</Cell>
        <Sogou>
          <SLogoBig $s={24}>S</SLogoBig>
          <SgText>英</SgText>
          <Ic w={10} h={12}><circle cx="2" cy="5" r="1.400" fill="#1e6fbf" /><path d="M8 3c1 3 0 6-2 7" fill="none" stroke="#1e6fbf" strokeWidth="1.600" /></Ic>
          <Ic w={14} h={16}><rect x="4" y="0" width="6" height="10" rx="3" fill="#1e78d2" /><path d="M1 7c0 6 12 6 12 0M7 12v3M3 15h8" stroke="#1e78d2" fill="none" strokeWidth="1.400" /></Ic>
          <Ic w={17} h={12}><rect x=".5" y=".5" width="16" height="11" rx="1.500" fill="#1e78d2" /><path d="M3 4h11M3 6.500h11" stroke="#fff" strokeDasharray="1.200 1" /><path d="M5 9h7" stroke="#fff" /></Ic>
          <Ic w={16} h={16}><circle cx="7" cy="4" r="3.500" fill="#c5c9cf" /><path d="M1 14c0-5 3-6 6-6s6 1 6 6z" fill="#c5c9cf" /></Ic>
          <Ic w={15} h={14}><path d="M5 1h5l5 3-2 3-2-1v8H4V6L2 7 0 4z" fill="#1e78d2" /></Ic>
          <Ic w={14} h={14}><path d="M1 13l6-7c-1-3 1-5 4-5l-2 3 2 2 3-2c0 3-2 5-5 4l-6 6z" fill="#1e78d2" /></Ic>
        </Sogou>
      </Status>

      <Task>
        <Start>
          <Ic s={16}><path d="M0 2.500L6.800 1.600V7.500H0zM7.600 1.500L16 .3V7.500H7.600zM0 8.400h6.800v6L0 13.500zM7.600 8.400H16v7.300l-8.400-1.200z" fill="#fff" /></Ic>
        </Start>
        <Search>
          <Ring />
          <SearchText>在这里输入你要搜索的内容</SearchText>
          <Ic w={12} h={18}><rect x="3.500" y=".5" width="5" height="11" rx="2.500" fill="none" stroke="#999" /><path d="M1 8c0 6 10 6 10 0M6 13v4M3 17h6" fill="none" stroke="#999" /></Ic>
        </Search>
        <Apps>
          <App $w={49}><Ic s={22}><g fill="#e8e8e8"><path d="M11 10C6 10 2 8 2 5s4-4 6-3 3 4 3 8zM12 11c0-5 2-9 5-9s4 4 3 6-4 3-8 3zM11 12c5 0 9 2 9 5s-4 4-6 3-3-4-3-8zM10 11c0 5-2 9-5 9s-4-4-3-6 4-3 8-3z" /></g></Ic></App>
          <App $w={49}><Ic s={22}><path d="M18 5C12 0 3 4 3 11s7 10 12 7 5-9 0-11-8 2-7 5 4 4 6 2" fill="none" stroke="#c8c8c8" strokeWidth="1.600" /></Ic></App>
          <App $w={56}><Ic s={24}><path d="M4 12C4 5 9 2 13 2c6 0 9 5 9 11H9c0 4 3 6 7 6 2 0 4-1 5-2v4c-2 1-4 2-7 2C8 23 3 19 3 12zM9 10h8c0-3-2-4-4-4s-4 2-4 4z" fill="#0b78d7" /></Ic></App>
          <App $w={46}><Ic w={20} h={20}><path d="M0 6h20v14H0z" fill="#f2f2f2" /><path d="M6 6c0-6 8-6 8 0" fill="none" stroke="#f2f2f2" strokeWidth="1.600" /><path d="M5 9h4v4H5zM10 9h4v4h-4zM5 14h4v4H5zM10 14h4v4h-4z" fill="#070d12" /></Ic></App>
          <App $w={50}><Ic w={22} h={20}><path d="M1 1h9l2 3h9v15H1z" fill="#f3d67a" /><rect x="1" y="6" width="20" height="13" fill="#f7df8f" /><path d="M7 19v-5h8v5z" fill="#2e93d8" /></Ic></App>
          <App $w={50} $run><Ic s={26}><path d="M3 13C3 6 9 2 15 3c4 1 8 5 8 10 0 4-3 6-6 6 3 0 3-5 2-8-2-3-8-6-12-3s-2 12 3 13c-5 0-7-4-7-8z" fill="#1590f0" /><path d="M14 8c-4 0-6 3-6 6s3 5 6 5 5-2 5-5h-6" fill="none" stroke="#1590f0" strokeWidth="3" /></Ic></App>
          <App $w={48} $run><Ic s={24}><circle cx="12" cy="12" r="10.500" fill="#8cc83c" stroke="#e8f0e0" strokeWidth="1.400" /><path d="M6 11h12M7 15h10" stroke="#fff" strokeWidth="2" /><path d="M7 11c1-4 9-4 10 0M7 15c2 3 7 3 9 1" stroke="#fff" fill="none" strokeWidth="1.600" /></Ic></App>
          <App $w={49} $run><Ic s={24}><rect x="1" y="1" width="22" height="22" rx="2" fill="#f5a623" /><path d="M5 7l11-2 3 12-11 2z" fill="#fff5d8" stroke="#b57a18" /><path d="M8 10h6M8 13h7" stroke="#b57a18" /><path d="M14 15l7-11" stroke="#b13b1a" strokeWidth="2" /></Ic></App>
          <App $w={47} $run $on><Ic s={24}><rect width="24" height="24" rx="4" fill="#1290ee" /><path d="M12 5v14M5 12h14M8 8c2 2 6 2 8 0M8 16c2-2 6-2 8 0" fill="none" stroke="#fff" strokeWidth="1.800" /></Ic></App>
        </Apps>
        <Tray>
          <TrayCell $w={70}><span>56%</span><span>CPU使用</span></TrayCell>
          <TrayCell $w={26}><Ic w={14} h={8}><path d="M1 7l6-6 6 6" fill="none" stroke="#fff" /></Ic></TrayCell>
          <TrayCell $w={25}><Ic w={17} h={11}><rect x="5.500" y="2.500" width="11" height="7" fill="none" stroke="#fff" /><rect x="7" y="4" width="6" height="4" fill="#fff" /><path d="M2 0v3M4 0v3M1 3h4v2H1zM3 5v4h3" stroke="#fff" fill="none" /></Ic></TrayCell>
          <TrayCell $w={23}><Ic s={13}><path d="M1 12a11 11 0 0 1 11-11M3.500 12A8.500 8.500 0 0 1 12 3.500M6 12a6 6 0 0 1 6-6M8.500 12a3.500 3.500 0 0 1 3.500-3.500" fill="none" stroke="#ddd" strokeDasharray="2 1" /><rect x="10" y="10" width="2.500" height="2.500" fill="#fff" /></Ic></TrayCell>
          <TrayCell $w={24}><Ic w={17} h={13}><path d="M1 4.500h3l4-4v12l-4-4H1z" fill="none" stroke="#fff" /><path d="M10 4c1 1 1 4 0 5M12 2c2 2 2 7 0 9" fill="none" stroke="#ddd" /></Ic></TrayCell>
          <TrayCell $w={30}><Ic w={23} h={13}><rect x=".5" y=".5" width="22" height="12" fill="none" stroke="#fff" /><path d="M3 4h17M3 6.500h17" stroke="#fff" strokeDasharray="1 1" /><path d="M6 9.500h11" stroke="#fff" /></Ic></TrayCell>
          <TrayCell $w={27}><b>英</b></TrayCell>
          <TrayCell $w={32}><SLogo $s={15}>S</SLogo></TrayCell>
          <TrayCell $w={73}><span>18:36</span><span>2017/9/6</span></TrayCell>
          <TrayCell $w={53}>
            <Ic w={14} h={14}><path d="M1 1h12v9H6l-2 3v-3H1z" fill="#fff" /></Ic>
            <NotifBadge>2</NotifBadge>
          </TrayCell>
        </Tray>
      </Task>
    </Root>
  );
}
